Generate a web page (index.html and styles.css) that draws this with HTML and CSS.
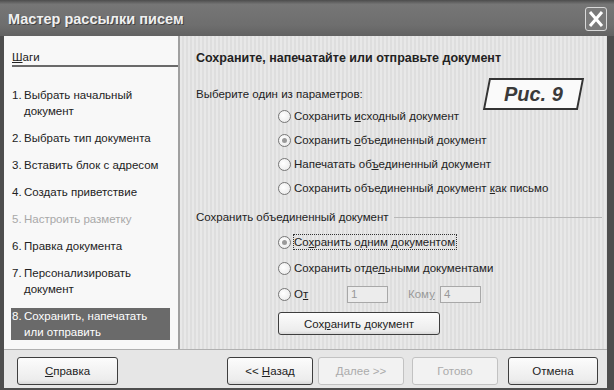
FILE: index.html
```html
<!DOCTYPE html>
<html lang="ru">
<head>
    <meta charset="UTF-8">
    <title>Мастер рассылки писем</title>
    <link rel="stylesheet" href="styles.css">
</head>
<body>
    <div class="window">
        <div class="titlebar">
            <span class="title">Мастер рассылки писем</span>
            <span class="close">
                <svg width="20" height="22" viewBox="0 0 20 22"><path d="M4 4 L16 18 M16 4 L4 18" stroke="#fff" stroke-width="3" fill="none"/></svg>
            </span>
        </div>
        <div class="frame">
            <div class="content">
                <div class="steps">
                    <div class="steps-head"><u>Ш</u>аги</div>
                    <div class="step"><span class="num">1.</span><span>Выбрать начальный документ</span></div>
                    <div class="step"><span class="num">2.</span><span>Выбрать тип документа</span></div>
                    <div class="step"><span class="num">3.</span><span>Вставить блок с адресом</span></div>
                    <div class="step"><span class="num">4.</span><span>Создать приветствие</span></div>
                    <div class="step off"><span class="num">5.</span><span>Настроить разметку</span></div>
                    <div class="step"><span class="num">6.</span><span>Правка документа</span></div>
                    <div class="step"><span class="num">7.</span><span>Персонализировать документ</span></div>
                    <div class="step current"><span class="num">8.</span><span>Сохранить, напечатать<br>или отправить</span></div>
                </div>
                <div class="pane">
                    <div class="pane-head">Сохраните, напечатайте или отправьте документ</div>
                    <div class="prompt">Выберите один из параметров:</div>
                    <div class="options">
                        <div class="opt"><span class="radio"></span><span>Сохранить <u>и</u>сходный документ</span></div>
                        <div class="opt"><span class="radio checked"></span><span>Сохранить <u>о</u>бъединенный документ</span></div>
                        <div class="opt"><span class="radio"></span><span>Напечатать об<u>ъ</u>единенный документ</span></div>
                        <div class="opt"><span class="radio"></span><span>Сохранить объединенный документ <u>к</u>ак письмо</span></div>
                    </div>
                    <div class="group-label">Сохранить объединенный документ</div>
                    <div class="options second">
                        <div class="opt"><span class="radio checked"></span><span class="focus">Со<u>х</u>ранить одним документом</span></div>
                        <div class="opt"><span class="radio"></span><span>Сохранить отде<u>л</u>ьными документами</span></div>
                        <div class="opt"><span class="radio"></span><span class="from">О<u>т</u></span><span class="field">1</span><span class="to">Ком<u>у</u></span><span class="field">4</span></div>
                        <button class="btn save">Сох<u>р</u>анить документ</button>
                    </div>
                    <div class="figure"><span>Рис. 9</span></div>
                </div>
            </div>
            <div class="footer">
                <button class="btn"><u>С</u>правка</button>
                <button class="btn back">&lt;&lt; <u>Н</u>азад</button>
                <button class="btn disabled"><u>Д</u>алее &gt;&gt;</button>
                <button class="btn disabled">Готово</button>
                <button class="btn cancel">Отмена</button>
            </div>
        </div>
    </div>
</body>
</html>
```

FILE: styles.css
```css
body {
    margin: 0;
    font-family: "Liberation Sans", Arial, sans-serif;
    font-size: 11.5px;
    color: #222;
}
.window {
    width: 614px;
    height: 390px;
    display: flex;
    flex-direction: column;
    background: #4e4e4e;
}
.titlebar {
    height: 36px;
    box-sizing: border-box;
    display: flex;
    align-items: center;
    justify-content: space-between;
    padding: 2px 7px 0 8px;
    background: linear-gradient(#4c4c4c, #767676 12%, #6e6e6e 70%, #626262);
}
.title {
    color: #f0f0f0;
    font-size: 14.5px;
    font-weight: bold;
    text-shadow: 1px 1px 0 #444;
}
.close {
    width: 22px;
    height: 24px;
    box-sizing: border-box;
    border: 1px solid #d8d8d8;
    border-radius: 3px;
    background: #7a7a7a;
    display: flex;
    align-items: center;
    justify-content: center;
}
.frame {
    flex: 1;
    display: flex;
    flex-direction: column;
    padding: 0 7px 2px 4px;
}
.content {
    height: 313px;
    display: flex;
    background: #e4e4e4;
}
.steps {
    width: 176px;
    flex-shrink: 0;
    box-sizing: border-box;
    background: #f8f8f8;
    border-right: 2px solid #a0a0a0;
    padding: 13px 0 0 8px;
}
.steps-head {
    line-height: 16px;
    border-bottom: 2px solid #6a6a6a;
    margin-bottom: 20px;
}
.step {
    display: flex;
    line-height: 16px;
    margin-bottom: 11px;
    margin-right: 8px;
}
.step .num {
    width: 12px;
    flex-shrink: 0;
}
.step.off {
    color: #a8a8a8;
}
.step.current {
    background: #6a6a6a;
    color: #fff;
    padding: 0 0 0 1px;
    margin-left: -1px;
}
.pane {
    flex: 1;
    position: relative;
    padding: 14px 5px 0 16px;
    background: repeating-linear-gradient(90deg, #e8e8e8 0 2px, #dedede 2px 4px);
}
.pane-head {
    font-weight: bold;
    font-size: 12.5px;
    line-height: 16px;
}
.prompt {
    line-height: 16px;
    margin-top: 20px;
}
.options {
    margin-left: 82px;
    margin-top: 2px;
}
.opt {
    height: 24px;
    display: flex;
    align-items: center;
}
.second .opt {
    height: 26px;
}
.radio {
    width: 11px;
    height: 11px;
    flex-shrink: 0;
    border: 1px solid #777;
    border-radius: 50%;
    background: radial-gradient(circle at 40% 40%, #fff, #e6e6e6);
    margin-right: 3px;
    position: relative;
}
.radio.checked::after {
    content: "";
    position: absolute;
    left: 3px;
    top: 3px;
    width: 5px;
    height: 5px;
    border-radius: 50%;
    background: #9a9a9a;
}
.focus {
    outline: 1px dotted #333;
    padding: 1px 1px 1px 0;
}
.group-label {
    display: flex;
    align-items: center;
    line-height: 16px;
    margin-top: 9px;
}
.group-label::after {
    content: "";
    flex: 1;
    border-top: 1px solid #b8b8b8;
    margin-left: 5px;
}
.second {
    margin-top: 4px;
}
.from {
    width: 53px;
}
.field {
    width: 41px;
    height: 17px;
    box-sizing: border-box;
    border: 1px solid #a8a8a8;
    background: #ececec;
    color: #999;
    padding-left: 3px;
    line-height: 15px;
}
.to {
    color: #999;
    margin-left: 20px;
    width: 32px;
}
.btn {
    font-family: "Liberation Sans", Arial, sans-serif;
    font-size: 11.5px;
    color: #222;
    height: 28px;
    width: 86px;
    border: 1px solid #3e3e3e;
    border-radius: 3px;
    background: linear-gradient(#fcfcfc, #ececec 85%, #d8d8d8);
    padding: 0;
}
.btn.save {
    width: 162px;
    height: 23px;
    margin-top: 5px;
}
.btn.disabled {
    color: #ababab;
    border-color: #c2c2c2;
    background: #f2f2f2;
}
.footer {
    flex: 1;
    display: flex;
    align-items: flex-start;
    gap: 5px;
    padding: 7px 9px 0 13px;
    border-top: 1px solid #b0b0b0;
    background: #e6e6e6;
}
.footer .btn:first-child {
    width: 101px;
}
.back {
    margin-left: auto;
}
.footer .disabled + .disabled {
    margin-left: 3px;
}
.cancel {
    width: 90px;
    margin-left: 5px;
}
.figure {
    position: absolute;
    left: 306px;
    top: 42px;
    width: 95px;
    height: 32px;
    box-sizing: border-box;
    border: 2px solid #333;
    background: #fafafa;
    transform: skewX(-11deg);
    display: flex;
    align-items: center;
    justify-content: center;
}
.figure span {
    transform: skewX(11deg);
    font-size: 20px;
    font-weight: bold;
    font-style: italic;
    color: #3a3a3a;
}
```
